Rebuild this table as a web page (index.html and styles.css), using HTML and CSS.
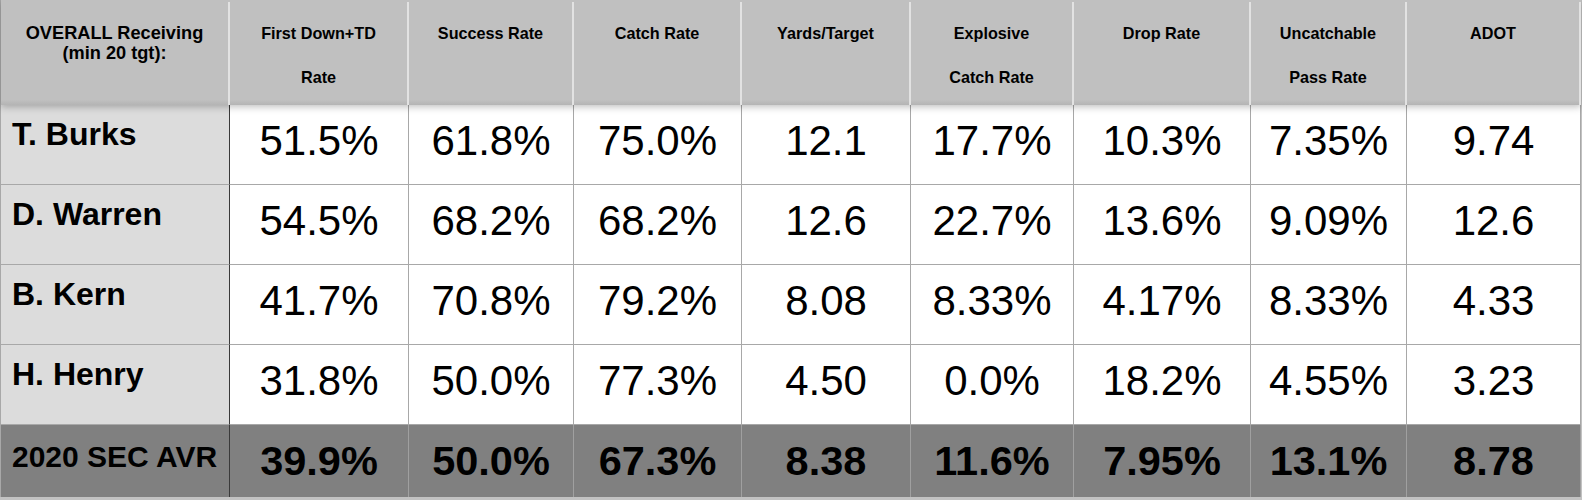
FILE: index.html
```html
<!DOCTYPE html>
<html lang="en">
<head>
<meta charset="utf-8">
<title>Overall Receiving</title>
<link rel="stylesheet" href="styles.css">
</head>
<body>
<div class="table">
  <div class="row head">
    <div class="cell corner">OVERALL Receiving<br>(min 20 tgt):</div>
    <div class="cell th">First Down+TD<br>Rate</div>
    <div class="cell th">Success Rate</div>
    <div class="cell th">Catch Rate</div>
    <div class="cell th">Yards/Target</div>
    <div class="cell th">Explosive<br>Catch Rate</div>
    <div class="cell th">Drop Rate</div>
    <div class="cell th">Uncatchable<br>Pass Rate</div>
    <div class="cell th">ADOT</div>
  </div>
  <div class="row data">
    <div class="cell name">T. Burks</div>
    <div class="cell val">51.5%</div>
    <div class="cell val">61.8%</div>
    <div class="cell val">75.0%</div>
    <div class="cell val">12.1</div>
    <div class="cell val">17.7%</div>
    <div class="cell val">10.3%</div>
    <div class="cell val">7.35%</div>
    <div class="cell val">9.74</div>
  </div>
  <div class="row data">
    <div class="cell name">D. Warren</div>
    <div class="cell val">54.5%</div>
    <div class="cell val">68.2%</div>
    <div class="cell val">68.2%</div>
    <div class="cell val">12.6</div>
    <div class="cell val">22.7%</div>
    <div class="cell val">13.6%</div>
    <div class="cell val">9.09%</div>
    <div class="cell val">12.6</div>
  </div>
  <div class="row data">
    <div class="cell name">B. Kern</div>
    <div class="cell val">41.7%</div>
    <div class="cell val">70.8%</div>
    <div class="cell val">79.2%</div>
    <div class="cell val">8.08</div>
    <div class="cell val">8.33%</div>
    <div class="cell val">4.17%</div>
    <div class="cell val">8.33%</div>
    <div class="cell val">4.33</div>
  </div>
  <div class="row data">
    <div class="cell name">H. Henry</div>
    <div class="cell val">31.8%</div>
    <div class="cell val">50.0%</div>
    <div class="cell val">77.3%</div>
    <div class="cell val">4.50</div>
    <div class="cell val">0.0%</div>
    <div class="cell val">18.2%</div>
    <div class="cell val">4.55%</div>
    <div class="cell val">3.23</div>
  </div>
  <div class="row avg">
    <div class="cell name">2020 SEC AVR</div>
    <div class="cell val">39.9%</div>
    <div class="cell val">50.0%</div>
    <div class="cell val">67.3%</div>
    <div class="cell val">8.38</div>
    <div class="cell val">11.6%</div>
    <div class="cell val">7.95%</div>
    <div class="cell val">13.1%</div>
    <div class="cell val">8.78</div>
  </div>
</div>
</body>
</html>
```

FILE: styles.css
```css
* { box-sizing: border-box; }

html, body {
  margin: 0;
  padding: 0;
  background: #c2c2c2;
}

body {
  font-family: "Liberation Sans", Arial, Helvetica, sans-serif;
  color: #000;
  width: 1582px;
  height: 500px;
  overflow: hidden;
}

.table {
  width: 1581px;
  border-left: 1px solid #a8a8a8;
}

.row {
  display: grid;
  grid-template-columns: 229px 179px 165px 168px 169px 163px 177px 156px 174px;
}

.cell {
  border-right: 1px solid #a8a8a8;
  border-bottom: 1px solid #a8a8a8;
}

/* header */
.head {
  height: 105px;
  position: relative;
  z-index: 1;
  background: linear-gradient(#c0c0c0 0, #c0c0c0 95%, #b4b4b4 100%);
  box-shadow: 0 2px 7px rgba(0, 0, 0, 0.25);
}

.head .cell {
  border-right: 2px solid #e2e2e2;
  border-bottom: none;
  margin-top: 2px;
  text-align: center;
  font-weight: bold;
}

.corner {
  font-size: 18.2px;
  line-height: 19.5px;
  padding-top: 22px;
}

.th {
  font-size: 16.2px;
  line-height: 44px;
  padding-top: 9px;
}

/* body rows */
.data {
  height: 80px;
  background: #fff;
}

.name {
  background: #dcdcdc;
  border-right: 1px solid #3a3a3a;
  font-weight: bold;
  font-size: 32px;
  line-height: 36px;
  padding: 11px 0 0 11px;
}

.val {
  text-align: center;
  font-size: 42px;
  line-height: 48px;
  padding-top: 12px;
}

.avg {
  height: 72px;
  background: #808080;
}

.avg .cell {
  border-bottom: none;
  border-right-color: #a0a0a0;
}

.avg .name {
  background: #808080;
  border-right-color: #3a3a3a;
  font-size: 30px;
  padding-top: 14px;
  padding-left: 11px;
}

.avg .val {
  font-weight: bold;
  font-size: 41.5px;
  padding-top: 12px;
}
```
